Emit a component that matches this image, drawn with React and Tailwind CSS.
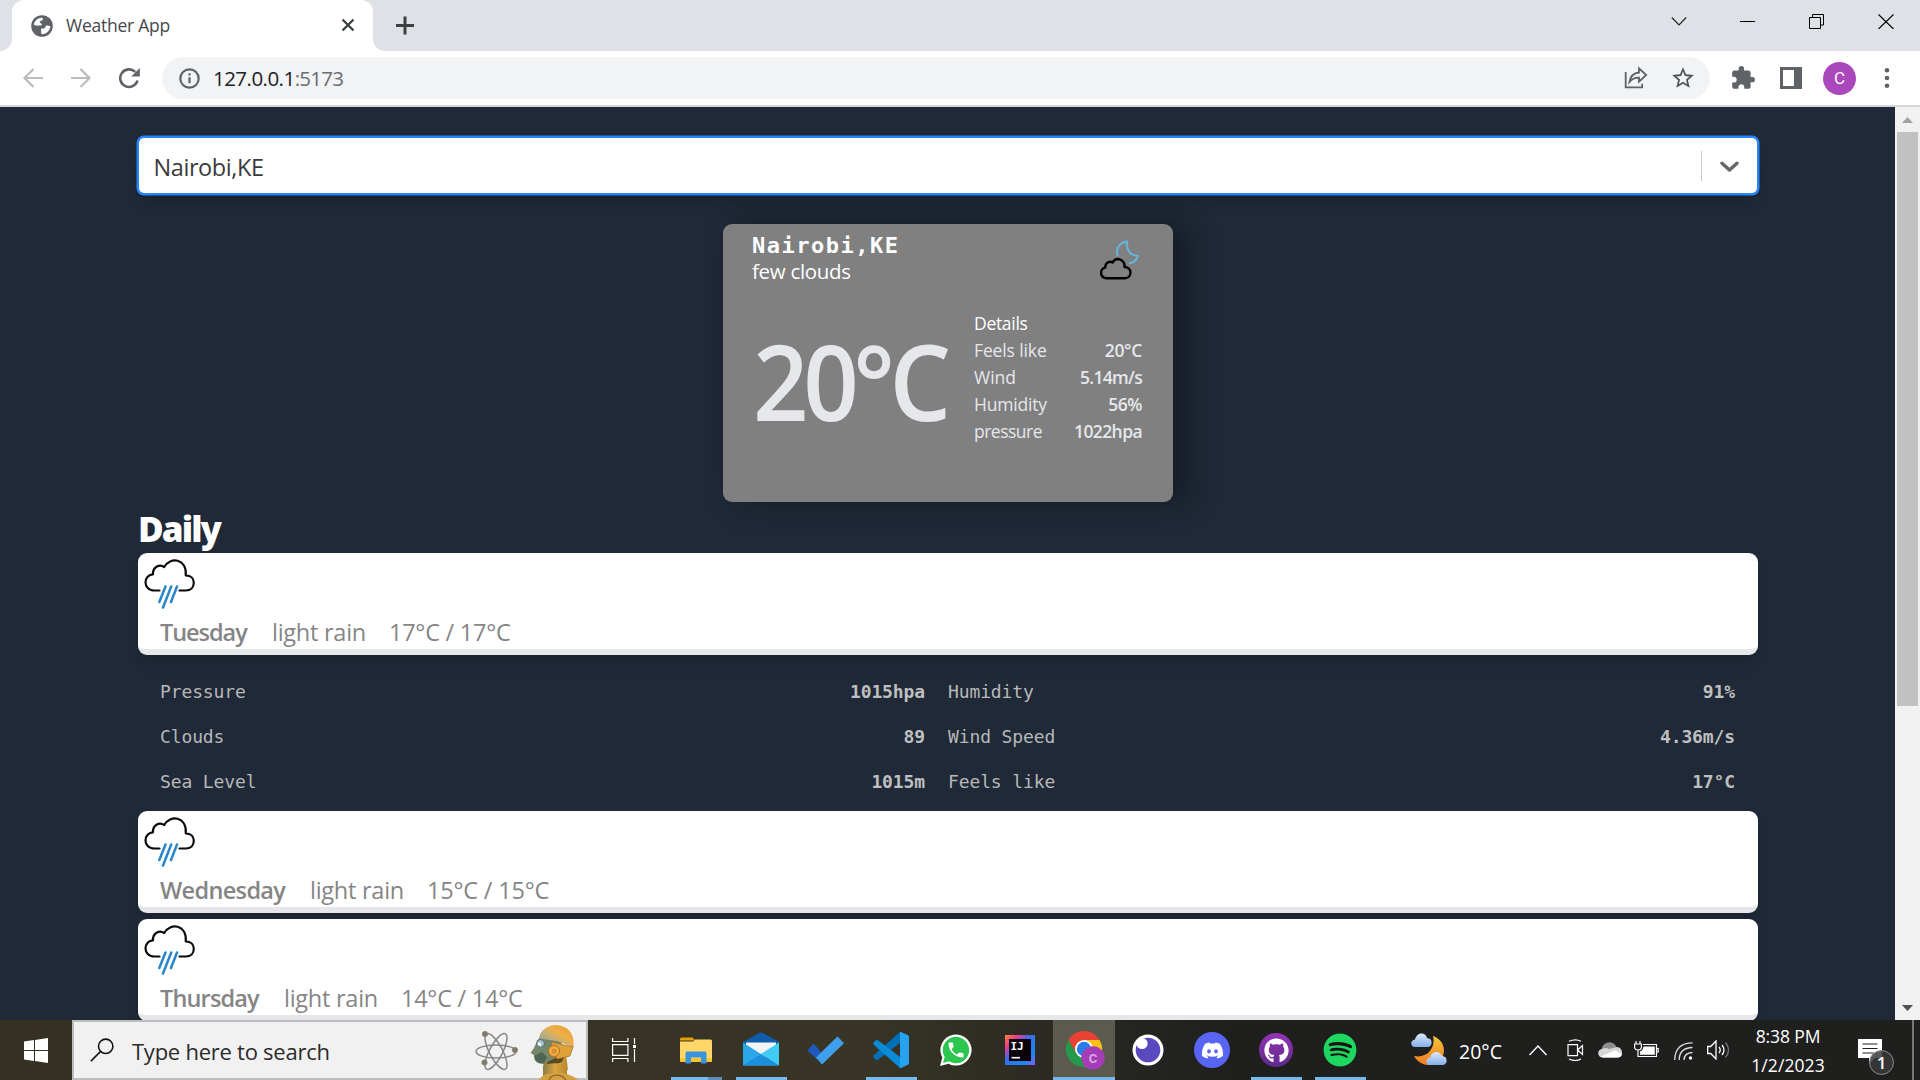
import React from "react";
import { MdStarBorder, MdExtension, MdPhone } from "react-icons/md";
import { FaGithub, FaSpotify, FaDiscord } from "react-icons/fa";

const days = [
  { name: "Tuesday", ls: "tracking-[-1.05px]", w: "w-[112px]", dw: "w-[117px]", tls: "tracking-[-0.25px]", temps: "17°C / 17°C", open: true },
  { name: "Wednesday", ls: "tracking-[-0.65px]", w: "w-[150px]", dw: "w-[117px]", tls: "tracking-[-0.2px]", temps: "15°C / 15°C" },
  { name: "Thursday", ls: "tracking-[-0.85px]", w: "w-[124px]", dw: "w-[117px]", tls: "tracking-[-0.25px]", temps: "14°C / 14°C" },
];

const details = [
  ["Pressure", "1015hpa", "Humidity", "91%"],
  ["Clouds", "89", "Wind Speed", "4.36m/s"],
  ["Sea Level", "1015m", "Feels like", "17°C"],
];

const current = [
  ["Feels like", "tracking-[-0.12px]", "20°C", "tracking-[-0.34px]"],
  ["Wind", "", "5.14m/s", "tracking-[-0.7px]"],
  ["Humidity", "tracking-[-0.2px]", "56%", "tracking-[-0.45px]"],
  ["pressure", "tracking-[-0.5px]", "1022hpa", "tracking-[-0.6px]"],
];

function TabStrip() {
  return (
    <div className="flex h-[51px] shrink-0 bg-[#dee1e6]">
      <svg className="h-[51px] w-3" viewBox="0 0 12 51"><path d="M12 39A12 12 0 0 1 0 51H12Z" fill="#fff" /></svg>
      <div className="flex h-[51px] w-[361px] items-center rounded-t-[12px] bg-white pb-[1px] pl-[19px]">
        <svg className="mt-[2px] h-[22px] w-[22px]" viewBox="0 0 22 22">
          <circle cx="11" cy="11" r="10.800" fill="#5f6368" />
          <path d="M2.800 9.500C3.500 6 6.500 3 10.500 2.700c1.700.2 2 1 1 2.200C10.300 6 8.500 6 8.800 7.200c.2 1.300 1.700.8 1.900 2 .2 1.300-1 1.200-2.200 1.200H4.500Z" fill="#fff" />
          <path d="M10.200 13.700c1.800-.3 2.700.3 3.600-.7 1-1 .3-2.200 1.800-2.500 1.400-.3 2.200.7 3.800.5-.2 4.300-3.800 8-8.200 8.200-1.300-.5-1.200-1.700-1-2.700.2-1-.6-1.800 0-2.800Z" fill="#fff" />
        </svg>
        <span className="ml-[13px] w-[275px] text-[17.5px] leading-6 tracking-[-0.25px] whitespace-nowrap text-[#45484b]">Weather App</span>
        <svg className="h-[14px] w-[14px]" viewBox="0 0 14 14"><path d="M1.500 1.500l11 11m0-11l-11 11" stroke="#3c4043" strokeWidth="2.300" /></svg>
      </div>
      <svg className="h-[51px] w-3" viewBox="0 0 12 51"><path d="M0 39A12 12 0 0 0 12 51H0Z" fill="#fff" /></svg>
      <svg className="mt-[16px] ml-[11px] h-[19px] w-[18px]" viewBox="0 0 18 19"><path d="M9 .5v18M0 9.500h18" stroke="#3c4043" strokeWidth="3" /></svg>
      <div className="ml-auto flex pt-[13px] pr-[26px]">
        <svg className="h-4 w-4" viewBox="0 0 16 16" fill="none" stroke="#222" strokeWidth="1.200"><path d="M.8 4.500L8 12l7.200-7.500" /></svg>
        <svg className="ml-[53px] h-4 w-4" viewBox="0 0 16 16"><path d="M0 8.500h15" stroke="#000" /></svg>
        <svg className="ml-[53px] h-4 w-4" viewBox="0 0 16 16" fill="none" stroke="#000"><path d="M.5 4.500h11v11H.5zM3.500 4.500V1.500h11v10.500h-3" /></svg>
        <svg className="ml-[53px] h-4 w-4" viewBox="0 0 16 16"><path d="M.5 1.500l15 14.500m0-14.500L.5 16" stroke="#000" strokeWidth="1.100" /></svg>
      </div>
    </div>
  );
}

function Toolbar() {
  return (
    <div className="flex h-14 shrink-0 items-center border-b-2 border-[#d5d5d6] bg-white pl-[22px]">
      <svg className="h-[22px] w-[22px]" viewBox="0 0 22 22" fill="none" stroke="#babcbe" strokeWidth="2.200"><path d="M21 11H2.500M11.500 2L2.500 11l9 9" /></svg>
      <svg className="ml-[26px] h-[22px] w-[22px]" viewBox="0 0 22 22" fill="none" stroke="#babcbe" strokeWidth="2.200"><path d="M1 11h18.500M10.500 2l9 9-9 9" /></svg>
      <svg className="ml-[26px] h-[22px] w-[22px]" viewBox="0 0 22 22" fill="none">
        <path d="M17.200 4.900A8.800 8.800 0 1 0 19.500 13.500" stroke="#5f6368" strokeWidth="2.600" />
        <path d="M21.800 1v8.500h-8.500Z" fill="#5f6368" />
      </svg>
      <div className="ml-[22px] flex h-[42px] w-[1548px] items-center rounded-full bg-[#f1f3f4] pl-[17px]">
        <svg className="h-[21px] w-[21px]" viewBox="0 0 21 21" fill="none" stroke="#5f6368" strokeWidth="2.200"><circle cx="10.500" cy="10.500" r="9.200" /><path d="M10.500 9.300v6M10.500 5.200v2.400" /></svg>
        <div className="ml-[13px] text-[20.5px] leading-7 whitespace-nowrap text-[#202124]"><span className="tracking-[-0.54px]">127.0.0.1</span><span className="tracking-[-0.75px] text-[#6a6e72]">:5173</span></div>
        <svg className="ml-auto h-6 w-6" viewBox="0 0 24 24" fill="none" stroke="#5f6368" strokeWidth="1.800">
          <path d="M1.700 6v15.300h16.500v-3.500" />
          <path d="M5.500 16c1-6.500 5-9 9.500-9.500V2.300l7.200 6.700-7.200 6.700v-4C11.500 11.500 8 13 5.500 16Z" />
        </svg>
        <MdStarBorder className="mr-[14px] ml-[22px] h-[26px] w-[26px] text-[#505459]" />
      </div>
      <MdExtension className="ml-[20px] h-[26px] w-[26px] text-[#5f6368]" />
      <svg className="ml-[24px] h-[22px] w-[22px]" viewBox="0 0 22 22"><path fill="#5f6368" fillRule="evenodd" d="M0 0h22v22H0ZM3 3v16h11V3Z" /></svg>
      <div className="ml-[21px] flex h-[33px] w-[33px] items-center justify-center rounded-full bg-[#ab47bc] font-[Roboto] text-[17px] leading-none text-white">C</div>
      <svg className="ml-[27px] h-[22px] w-[8px]" viewBox="0 0 8 22" fill="#5f6368"><circle cx="4" cy="3.300" r="2.300" /><circle cx="4" cy="11" r="2.300" /><circle cx="4" cy="18.700" r="2.300" /></svg>
    </div>
  );
}

function CityPicker() {
  return (
    <div className="-ml-px flex h-[59px] w-[1622px] shrink-0 items-center rounded-[7px] border-2 border-[#2684ff] bg-white shadow-lg ring-[0.5px] ring-[#2684ff]">
      <span className="mt-[2px] ml-[14.500px] ml-[14.5px] text-[23.5px] leading-[30px] tracking-[-0.42px] text-[#3b3b3b]">Nairobi,KE</span>
      <div className="ml-auto h-[30px] w-px bg-[#cccccc]" />
      <svg className="mt-[2px] mr-[18px] ml-[18px] h-3 w-[19px]" viewBox="0 0 19 12" fill="none" stroke="#666" strokeWidth="3.400" strokeLinecap="round" strokeLinejoin="round"><path d="M2 2.200L9.500 9 17 2.200" /></svg>
    </div>
  );
}

function MoonCloud() {
  return (
    <svg className="h-10 w-10" viewBox="0 0 40 40" fill="none" strokeLinejoin="round" strokeLinecap="round">
      <path d="M17.500 15C15.500 9 19.500 2.500 27 1.700 26 10.500 30.500 15.500 38 15.800 36.500 20 33.500 22.600 29.800 23.200" stroke="#67b2d8" strokeWidth="2.200" />
      <path d="M6.500 38.200C-.5 38-.5 28.600 5.200 27.600 5 22.500 9.800 20.600 12.500 22.500c4-6.300 12.500-3 12 4.500 3.600.2 6 2.600 6 5.500 0 3.200-2 5.700-5.500 5.700Z" stroke="#000" strokeWidth="2.400" />
    </svg>
  );
}

function RainCloud() {
  return (
    <svg className="h-[52px] w-[52px]" viewBox="0 0 52 52" fill="none" strokeLinecap="round" strokeLinejoin="round">
      <path d="M15.500 33.500H10.500C4.500 33.500 1.500 29.500 1.500 25.500c0-4.700 3.200-8 7.500-8.200-.5-7 6.200-10.600 11.200-7.300C26-.6 43 1.200 41.800 18.500c5 0 8 3.200 8 7.300 0 4.500-3.200 7.700-8 7.700H35.500" stroke="#0b0b0b" strokeWidth="2.200" />
      <path d="M21.500 29.500l-6.200 15.500M27.200 29.500l-8.200 21M33 29.500L27 45" stroke="#2b86c9" strokeWidth="2.500" />
    </svg>
  );
}

function CurrentCard() {
  return (
    <div className="h-[278px] w-[450px] rounded-[9px] bg-[#808080] pt-2 pr-[31px] pl-[30px] text-white shadow-[15px_0px_30px_2px_rgba(0,0,0,0.32)]">
      <div className="flex h-[49px] justify-between">
        <div>
          <p className="-ml-px font-['DejaVu_Sans_Mono',monospace] text-[22px] leading-[28px] font-bold tracking-[1.5px]">Nairobi,KE</p>
          <p className="-ml-px text-[20.5px] leading-[22px] tracking-[-0.3px]">few clouds</p>
        </div>
        <div className="mt-[8px] mr-[2px]"><MoonCloud /></div>
      </div>
      <div className="mt-[29px] flex justify-between">
        <p className="mt-[19px] origin-left scale-x-[0.93] text-[104.5px] leading-[104px] font-semibold tracking-[-5.8px] text-[#e5e7eb]">20°C</p>
        <div className="w-[168px] text-[17.5px] leading-[27px] text-[#e5e7eb]">
          <p className="tracking-[-0.3px] text-white">Details</p>
          {current.map(([k, kl, v, vl]) => (
            <div key={k} className="flex justify-between">
              <span className={kl}>{k}</span>
              <span className={`font-semibold ${vl}`}>{v}</span>
            </div>
          ))}
        </div>
      </div>
    </div>
  );
}

function DayRow({ day }) {
  return (
    <div className="h-[102px] rounded-[9px] border-b-[6px] border-[#e5e7eb] bg-white pt-[4px] pl-[5.5px] shadow-lg">
      <RainCloud />
      <div className="mt-[8px] flex pl-[16.5px] text-[23.5px] leading-[30px] whitespace-nowrap text-[#858585]">
        <span className={`font-semibold ${day.ls} ${day.w}`}>{day.name}</span>
        <span className={`tracking-[-0.25px] ${day.dw}`}>light rain</span>
        <span className={day.tls}>{day.temps}</span>
      </div>
    </div>
  );
}

function DayDetails() {
  return (
    <div className="h-[156px] pt-[14px] pr-[22px] pl-[22px] font-['DejaVu_Sans_Mono',monospace] text-[18px] leading-[45px] tracking-[-0.12px] text-[#b8b8b8]">
      {details.map(([a, av, b, bv]) => (
        <div key={a} className="grid grid-cols-[765px_788px] gap-x-[23px]">
          <div className="flex justify-between"><span>{a}</span><b className="text-[#bfbfbf]">{av}</b></div>
          <div className="flex justify-between pr-px"><span>{b}</span><b className="text-[#bfbfbf]">{bv}</b></div>
        </div>
      ))}
    </div>
  );
}

function Cell({ w = "w-16", line, children, className = "" }) {
  return (
    <div className={`flex h-full shrink-0 flex-col items-center ${w} ${className}`}>
      <div className="flex h-[57px] items-center pt-[3px]">{children}</div>
      {line}
    </div>
  );
}

const underline = <div className="ml-px h-[3px] w-[51px] bg-[#76b9ed]" />;

function SearchArt() {
  return (
    <svg className="h-[60px] w-[120px]" viewBox="0 0 120 60">
      <defs>
        <linearGradient id="dome" x1="0" y1="1" x2="1" y2="0"><stop offset="0" stopColor="#6f98a0" /><stop offset=".35" stopColor="#b9ad80" /><stop offset=".6" stopColor="#eeb04a" /><stop offset="1" stopColor="#e79a25" /></linearGradient>
        <linearGradient id="neck" x1="0" y1="0" x2="1" y2="0"><stop offset="0" stopColor="#8a7b45" /><stop offset=".5" stopColor="#d9a441" /><stop offset="1" stopColor="#b8862c" /></linearGradient>
      </defs>
      <g fill="none" stroke="#858789" strokeWidth="1.500">
        <ellipse cx="27" cy="31.500" rx="20" ry="6.500" />
        <ellipse cx="27" cy="31.500" rx="20" ry="6.500" transform="rotate(62 27 31.500)" />
        <ellipse cx="27" cy="31.500" rx="20" ry="6.500" transform="rotate(118 27 31.500)" />
      </g>
      <g fill="#6d7d7b" stroke="#a88458" strokeWidth=".8"><circle cx="16" cy="14" r="2.700" /><circle cx="46" cy="30" r="2.700" /><circle cx="15.500" cy="42.500" r="2.700" /></g>
      <path d="M75 36L97 34 99 50H74Z" fill="url(#neck)" />
      <path d="M79 41L96 34 93 42 76 48Z" fill="#5a4a24" />
      <path d="M70 18C68 22 66 25 65 28L61.500 33l3 1.500 1 5c2 4 6 5 10 4l13-7 5-16Z" fill="#76866a" />
      <path d="M66 35.500l7-3.500 5 5-3 6.500c-5 0-9-3-9-5.500Z" fill="#4f6555" />
      <path d="M70 18.500C71 9 82 3 91 5.500c10 2.500 15 10 13.500 22L88 21Z" fill="url(#dome)" />
      <path d="M82 22l22 5-3 9-13 3Z" fill="#e0a33c" stroke="#a06d1e" strokeWidth=".7" />
      <circle cx="85" cy="31" r="5.500" fill="#f0ad45" stroke="#b2731c" />
      <circle cx="85" cy="31" r="2.600" fill="#d9902e" />
      <circle cx="71.500" cy="23.500" r="4" fill="#a9c3c8" stroke="#4f6a6c" /><circle cx="70.500" cy="24" r="1.600" fill="#fff" />
      <path d="M74 46c8-4 18-3 24 0v10H74Z" fill="url(#neck)" />
      <path d="M70 60c3-6 12-8 22-7 8 1 14 4 17 7Z" fill="#d3a044" />
      <path d="M80 60c2-6 12-7 17 0" fill="none" stroke="#8b6524" strokeWidth="1.200" />
    </svg>
  );
}

function Taskbar() {
  return (
    <div className="flex h-[60px] shrink-0 bg-linear-to-r from-[#343122] via-[#383526] via-45% to-[#1f1f1e] to-64% text-white">
      <div className="flex w-[72px] shrink-0 items-center justify-center">
        <svg className="h-[25px] w-6" viewBox="0 0 24 25" fill="#fff"><path d="M0 3.500L10 2v9.900H0ZM11 1.900L24 0v11.900H11ZM0 13h10v9.900L0 21.500ZM11 13h13v12l-13-1.900Z" /></svg>
      </div>
      <div className="flex w-[516px] shrink-0 items-center border-2 border-[#bdbdbd] bg-[#f1f1f1] pl-[15px]">
        <svg className="h-6 w-[26px]" viewBox="0 0 26 26" fill="none" stroke="#111" strokeWidth="1.700"><circle cx="17" cy="9" r="7.800" /><path d="M11.500 14.500L1 25" /></svg>
        <span className="mt-[2px] ml-[17px] text-[22px] leading-[30px] tracking-[-0.25px] whitespace-nowrap text-[#2b2b2b]">Type here to search</span>
        <div className="-mr-[3px] ml-auto"><SearchArt /></div>
      </div>
      <Cell w="w-[76px]" className="pr-1">
        <svg className="h-6 w-6" viewBox="0 0 24 24" fill="none" stroke="#fff" strokeWidth="1.200"><path d="M.6 0v3.500h15.300V0M.6 6.600h15.300v10.800H.6ZM.6 24v-3.500h15.300V24M22.500 0v6M22.500 11v13" /><path d="M21 7h3v3h-3z" fill="#fff" stroke="none" /></svg>
      </Cell>
      <Cell line={<div className="ml-px flex h-[3px] w-[51px] bg-[#5f8fb8]"><div className="h-[3px] w-[37px] bg-[#76b9ed]" /></div>}>
        <svg className="h-[27px] w-8" viewBox="0 0 32 27"><path d="M0 2Q0 .5 1.500.5h11l2.500 3H0Z" fill="#e5a100" /><path d="M0 4.500h13l2-2h15.500Q32 2.500 32 4v19.500q0 1.500-1.500 1.500h-29Q0 25 0 23.500Z" fill="#ffd667" /><path d="M0 21h32v2.500q0 1.500-1.500 1.500h-29Q0 25 0 23.500Z" fill="#fbc535" /><path d="M5.500 26.500V16q0-1.500 1.500-1.500h18q1.500 0 1.500 1.500v10.500h-5.500v-6H11v6Z" fill="#3b93dd" /></svg>
      </Cell>
      <Cell className="ml-px" line={underline}>
        <svg className="-mt-[3px] h-[34px] w-9" viewBox="0 0 36 34"><path d="M0 10L16.500.8q1.500-.8 3 0L36 10v3H0Z" fill="#0f5cad" /><path d="M3 10.500h30v10L18 27 3 20Z" fill="#f4f4f4" /><path d="M0 10.500L36 33.500H0Z" fill="#2aa7e9" /><path d="M36 10.500L18 22l18 11.500Z" fill="#3fccf5" /><path d="M18 22l18 11.500H0Z" fill="#1d90dd" /></svg>
      </Cell>
      <Cell className="ml-px">
        <svg className="h-[29px] w-9" viewBox="0 0 36 29"><path d="M0 14.500L5.500 8l8.500 10-4.500 5.500Z" fill="#1d59bd" stroke="#1d59bd" strokeLinejoin="round" /><path d="M8.500 21.500L29.500 1 35.500 7.200 14 28Z" fill="#3f9fec" stroke="#3f9fec" strokeLinejoin="round" /></svg>
      </Cell>
      <Cell className="ml-px" line={underline}>
        <svg className="h-9 w-9" viewBox="0 0 36 36"><path d="M27 0L1 23q-1.300 1.500 0 3l2 1.700q1 .8 2 0L27 11Z" fill="#0070b8" /><path d="M27 36L1 13q-1.300-1.500 0-3l2-1.700q1-.8 2 0L27 25Z" fill="#0a8bd8" /><path d="M26.500.2q1-.4 2 0L35 3.300q1 .5 1 1.600v26.200q0 1.100-1 1.600l-6.500 3.100q-1 .4-2 0 .5 0 .5-1V1.200q0-1-.5-1Z" fill="#25a3f0" /></svg>
      </Cell>
      <Cell className="ml-px">
        <div className="relative h-8 w-8">
          <svg className="h-8 w-8" viewBox="0 0 32 32"><path d="M0 32L2.300 23.500A15.600 15.600 0 1 1 8.500 29.700Z" fill="#fff" /><path d="M3 29l1.700-6A13.200 13.200 0 1 1 9 27.300Z" fill="#2cc64f" /></svg>
          <MdPhone className="absolute top-[6px] left-[6px] h-5 w-5" />
        </div>
      </Cell>
      <Cell>
        <svg className="h-[30px] w-[30px]" viewBox="0 0 30 30"><defs><linearGradient id="ij" x1="0" y1="0" x2="1" y2="1"><stop offset="0" stopColor="#fb8a2c" /><stop offset=".22" stopColor="#f0398a" /><stop offset=".42" stopColor="#3f6bea" /><stop offset=".75" stopColor="#1487f5" /><stop offset="1" stopColor="#8a5bf5" /></linearGradient></defs><path d="M0 0h30v30H0Z" fill="url(#ij)" /><path d="M4 4h22v22H4Z" fill="#0a0208" /><path d="M6.500 22.700h8.500" stroke="#fff" strokeWidth="1.600" /><text x="5.500" y="15" fontFamily="DejaVu Sans Mono" fontWeight="700" fontSize="11" fill="#fff">IJ</text></svg>
      </Cell>
      <Cell w="w-[62px]" className="ml-px bg-[#5b5a4f]" line={<div className="h-[3px] w-full bg-[#76b9ed]" />}>
        <svg className="mt-[1px] ml-[2px] h-[39px] w-[39px]" viewBox="0 0 39 39">
          <path d="M2.400 9A18 18 0 0 1 33.600 9H18L10.200 22.500Z" fill="#e94235" />
          <path d="M33.600 9A18 18 0 0 1 18 36L25.800 22.500 18 9Z" fill="#fbc116" />
          <path d="M2.400 9A18 18 0 0 0 18 36L25.800 22.500H10.200Z" fill="#229a49" />
          <circle cx="18" cy="18" r="9" fill="#fff" /><circle cx="18" cy="18" r="7.200" fill="#2a7de9" />
          <circle cx="27" cy="27" r="11.700" fill="#a63db8" />
          <text x="27" y="31.500" textAnchor="middle" fontFamily="Roboto" fontWeight="700" fontSize="13" fill="#dba8e3">C</text>
        </svg>
      </Cell>
      <Cell className="ml-px">
        <svg className="h-8 w-8" viewBox="0 0 32 32"><circle cx="16" cy="16" r="15.500" fill="#fff" /><circle cx="16" cy="16" r="12.300" fill="#5a49be" /><circle cx="10" cy="9.500" r="5.600" fill="#fff" /></svg>
      </Cell>
      <Cell><div className="flex h-9 w-9 items-center justify-center rounded-full bg-[#5865f2]"><FaDiscord className="h-[23px] w-[23px]" /></div></Cell>
      <Cell line={underline}><div className="flex h-[34px] w-[34px] items-center justify-center rounded-full bg-linear-to-b from-[#9433b5] to-[#5f2a8a]"><FaGithub className="h-[25px] w-[25px]" /></div></Cell>
      <Cell line={underline}><div className="flex h-[34px] w-[34px] items-center justify-center rounded-full bg-[#191414]"><FaSpotify className="h-[34px] w-[34px] text-[#1ed760]" /></div></Cell>
      <div className="flex grow items-center pl-[39px]">
        <svg className="-mt-[1px] h-9 w-9" viewBox="0 0 36 36">
          <defs><linearGradient id="moon" x1="0" y1="0" x2="0" y2="1"><stop offset="0" stopColor="#f6c63a" /><stop offset="1" stopColor="#f07a22" /></linearGradient><linearGradient id="cl" x1="0" y1="0" x2="0" y2="1"><stop offset="0" stopColor="#dbe8fb" /><stop offset="1" stopColor="#86aeea" /></linearGradient></defs>
          <path d="M22 4c9 3 13 12 10 20-4 11-22 13-29 0 13 3 22-8 19-20Z" fill="url(#moon)" />
          <path d="M4 15C-1 15-1 8 4 7.500 6-.5 15 0 16 6c6 0 6 8 1 9Z" fill="url(#cl)" />
          <path d="M19 33c-5 0-5-7 0-7.500 2-7 10-7 12-1.500 6 0 6 8 1 9Z" fill="url(#cl)" />
        </svg>
        <span className="mt-[4px] ml-3 w-[70px] text-[19.5px] leading-6">20°C</span>
        <svg className="h-[11px] w-[18px]" viewBox="0 0 18 11" fill="none" stroke="#fff" strokeWidth="1.400"><path d="M.5 10L9 1l8.500 9" /></svg>
        <svg className="ml-[20px] h-[22px] w-[17px]" viewBox="0 0 17 22" fill="none" stroke="#fff" strokeWidth="1.200"><path d="M1 5.600h9.500v11H1ZM10.500 11l5-4.500v9ZM2 2.300q6.500-3 12 0M2 20q6.500 3 12 0" /></svg>
        <svg className="ml-[14px] h-4 w-[25px]" viewBox="0 0 25 16"><path d="M4 9C3 3 9-1 14 .8c3 1 4 3 4.500 4.700L9 11Z" fill="#8d8d8d" /><path d="M5 15.500C-1 15.500-1.500 8 4 7c2-1.500 5-1.500 7 0l8-2c6 .5 7 9 1 10.500Z" fill="#d6d6d6" /><path d="M2.500 14.800L17 8.200l7 4q-1 3.300-4 3.300H5Z" fill="#fff" /></svg>
        <svg className="mt-[-1px] ml-[11px] h-[17px] w-[25px]" viewBox="0 0 25 17" fill="none" stroke="#fff" strokeWidth="1.200"><path d="M2 0v3M6 0v3M.6 3h6.800v3.500Q7 9 4 9T.6 6.500ZM4 9v6.500h18.500v-12H9M22.500 7.500h1.700v3.500h-1.700" /><path d="M9.500 5.500h11.300v8.300H6V10.500q3-1 3.500-5Z" fill="#fff" stroke="none" /></svg>
        <svg className="mt-[2px] ml-[15px] h-[18px] w-[19px]" viewBox="0 0 19 18" fill="none" stroke="#ddd" strokeWidth="1.300"><path d="M.7 18Q1 1 18.500.8M5.300 18Q5 6 18.500 5.500M10 18q0-7 8.500-7.500" /><circle cx="16.500" cy="16" r="1.700" fill="#fff" stroke="none" /></svg>
        <svg className="ml-[14px] h-5 w-[23px]" viewBox="0 0 23 20" fill="none" stroke="#fff" strokeWidth="1.300"><path d="M.7 6.500h3L9 1v18l-5.300-5.500h-3ZM12 7q2.500 3 0 6M15 5q4 5 0 10" /><path d="M18.500 2.500q6 7.500 0 15" stroke="#777" /></svg>
        <div className="mt-px ml-[20px] w-[76px] text-center text-[17.5px] leading-[29px] whitespace-nowrap"><p className="tracking-[-0.11px]">8:38 PM</p><p className="tracking-[0.1px]">1/2/2023</p></div>
        <svg className="mt-[15px] ml-[32px] h-[38px] w-[38px]" viewBox="0 0 38 38"><path d="M0 0h24v19h-7l-6 6V19H0Z" fill="#fff" /><path d="M4.500 5h15M4.500 9.500h15M4.500 14h11" stroke="#1f1f1e" strokeWidth="1.200" /><circle cx="23.500" cy="23.500" r="12" fill="#3a3a39" fillOpacity=".85" stroke="#8b8b8a" /><text x="23.500" y="29.500" textAnchor="middle" fontFamily="Open Sans" fontWeight="600" fontSize="17" fill="#fff">1</text></svg>
        <div className="mr-[6px] ml-auto h-[60px] w-[2px] bg-[#777]" />
      </div>
    </div>
  );
}

export default function App() {
  return (
    <div className="flex h-[1080px] w-[1920px] flex-col overflow-hidden font-['Open_Sans','Noto_Sans',sans-serif]">
      <TabStrip />
      <Toolbar />
      <div className="flex h-[913px] shrink-0 overflow-hidden bg-[#1f2937]">
        <main className="flex w-[1895px] shrink-0 flex-col pt-[29px] pr-[137px] pl-[138px]">
          <CityPicker />
          <div className="mt-[29px] flex shrink-0 justify-center"><CurrentCard /></div>
          <h1 className="h-[51px] shrink-0 pt-[9px] text-[35px] leading-9 font-extrabold tracking-[-1.9px] text-white">Daily</h1>
          <div className="flex shrink-0 flex-col">
            {days.map((d, i) => (
              <div key={d.name} className={i === 1 ? "mb-[6px]" : ""}>
                <DayRow day={d} />
                {d.open && <DayDetails />}
              </div>
            ))}
          </div>
        </main>
        <div className="flex w-[25px] shrink-0 flex-col items-center bg-[#f1f1f1]">
          <svg className="mt-[10px] h-[6px] w-[11px]" viewBox="0 0 11 6"><path d="M0 6L5.500 0 11 6Z" fill="#a3a3a3" /></svg>
          <div className="mt-[9px] h-[574px] w-[21px] bg-[#c1c1c1]" />
          <svg className="mt-auto mb-[9px] h-[6px] w-[11px]" viewBox="0 0 11 6"><path d="M0 0L5.500 6 11 0Z" fill="#505050" /></svg>
        </div>
      </div>
      <Taskbar />
    </div>
  );
}
